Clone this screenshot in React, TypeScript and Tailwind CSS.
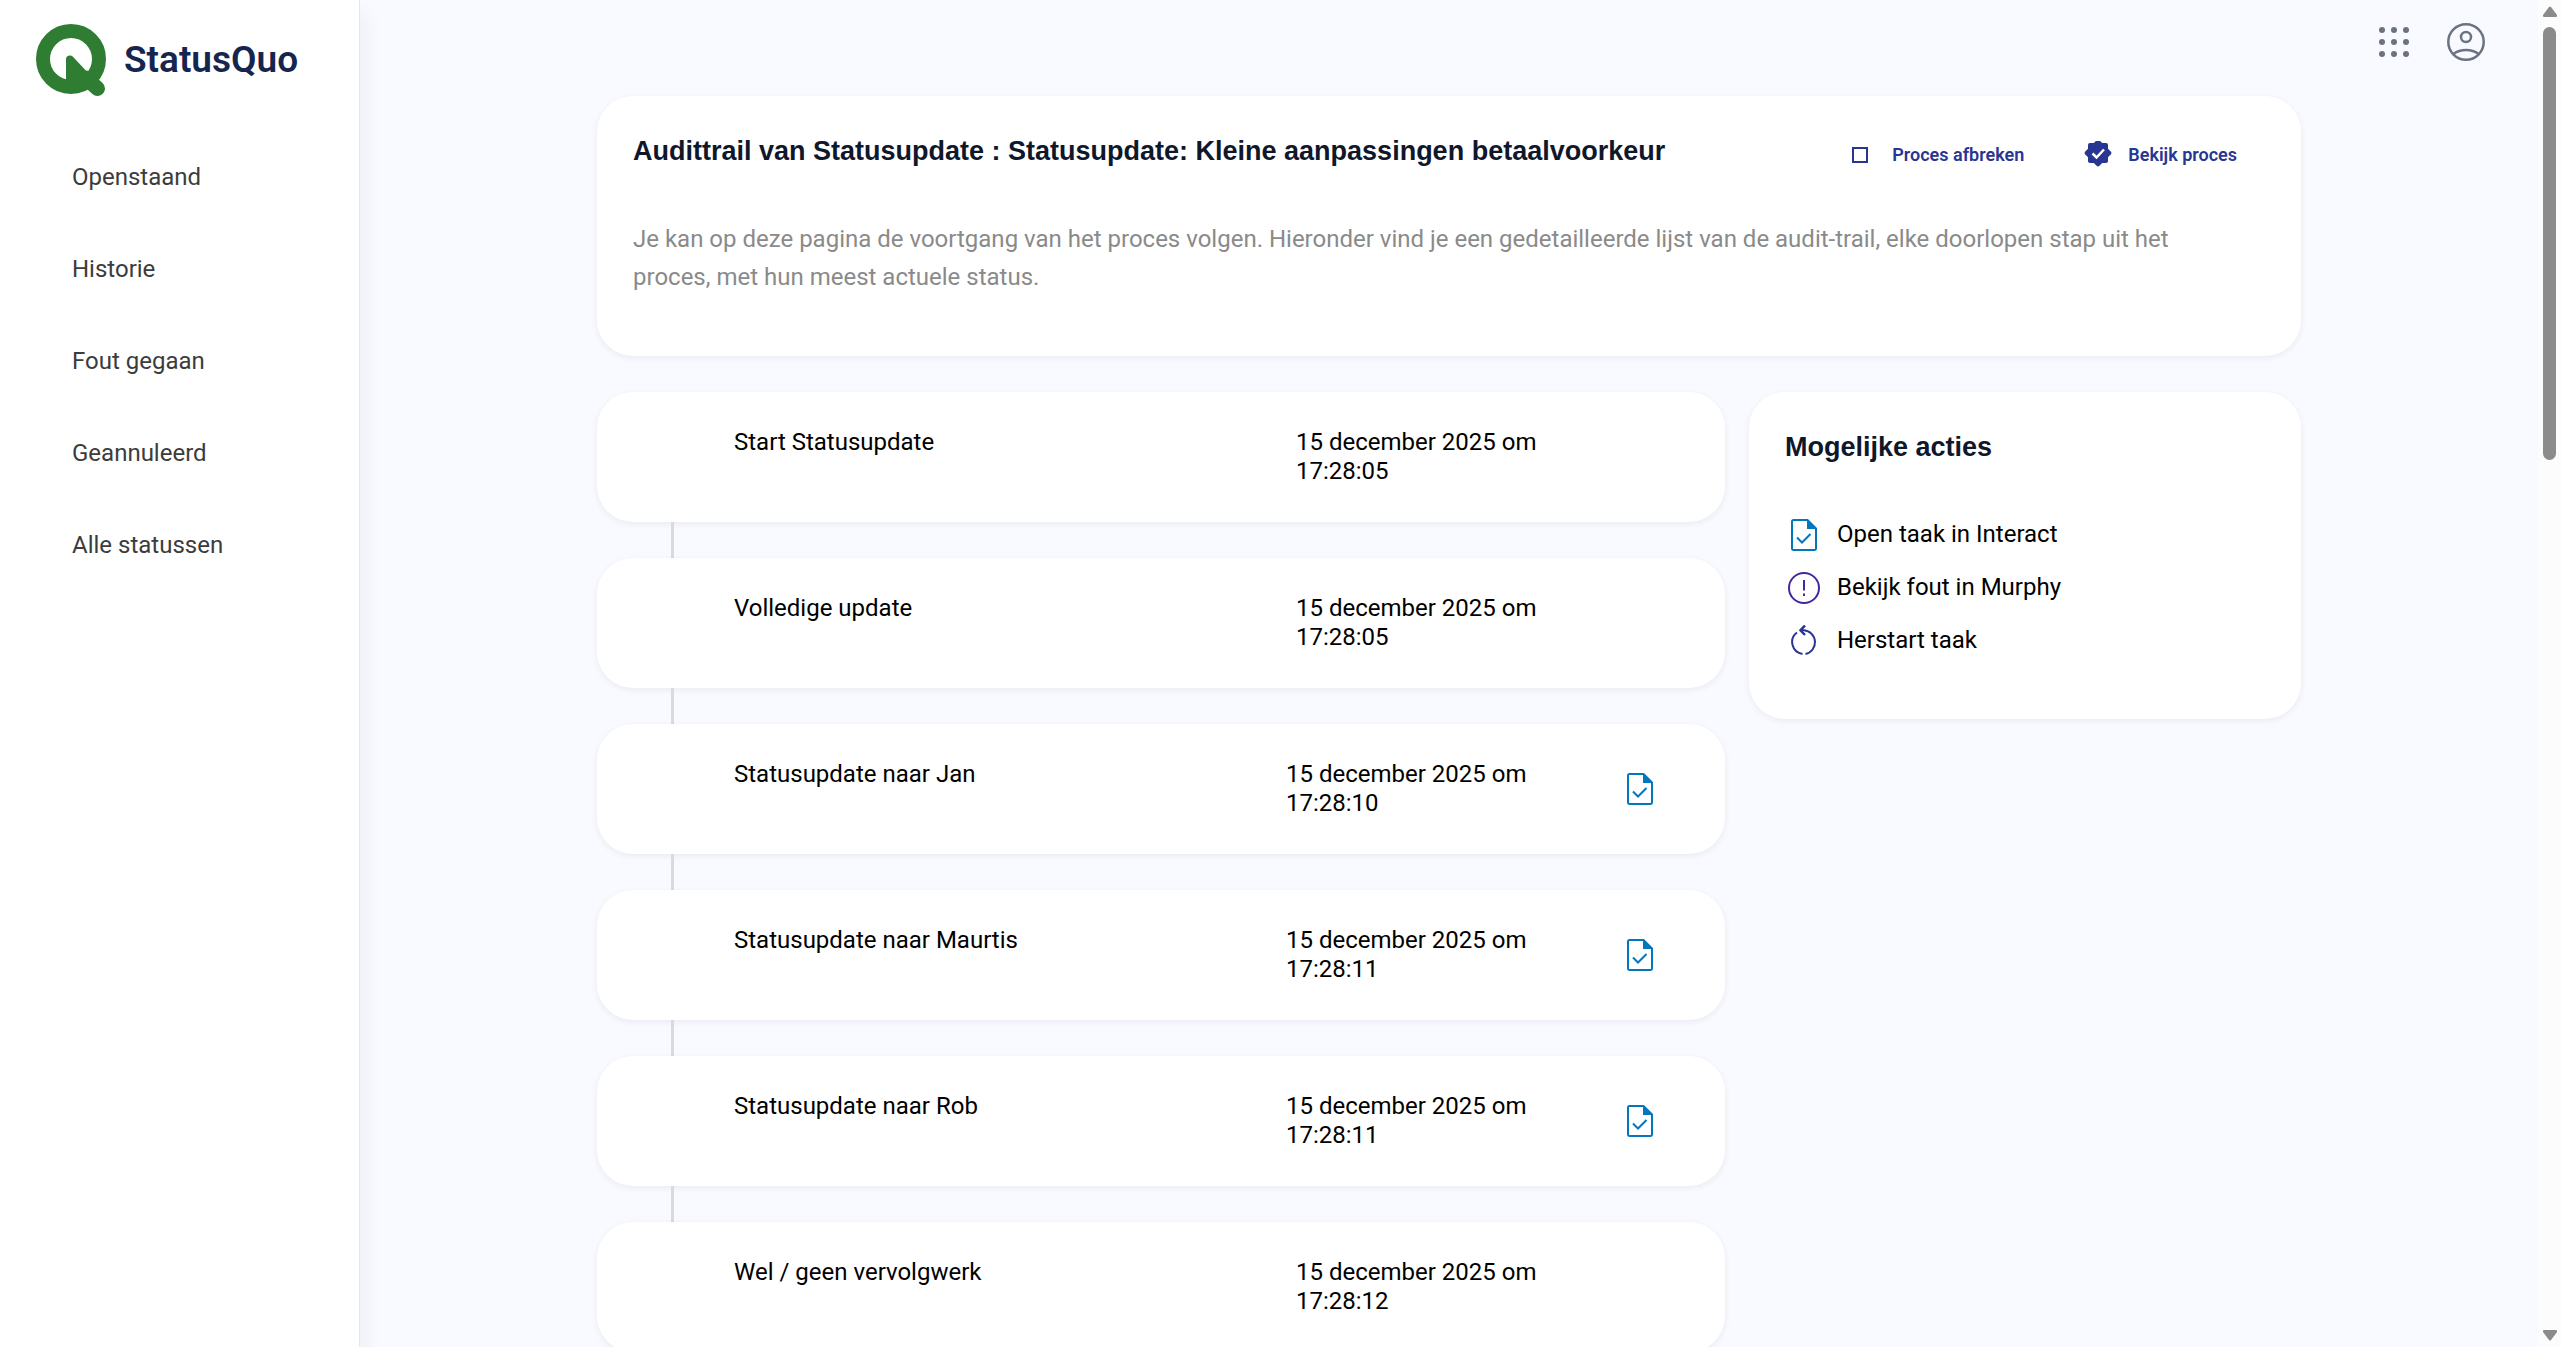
type Step = {
  name: string;
  time: string;
  task?: boolean;
};

const menu = ["Openstaand", "Historie", "Fout gegaan", "Geannuleerd", "Alle statussen"];

const steps: Step[] = [
  { name: "Start Statusupdate", time: "15 december 2025 om 17:28:05" },
  { name: "Volledige update", time: "15 december 2025 om 17:28:05" },
  { name: "Statusupdate naar Jan", time: "15 december 2025 om 17:28:10", task: true },
  { name: "Statusupdate naar Maurtis", time: "15 december 2025 om 17:28:11", task: true },
  { name: "Statusupdate naar Rob", time: "15 december 2025 om 17:28:11", task: true },
  { name: "Wel / geen vervolgwerk", time: "15 december 2025 om 17:28:12" },
];

const card = "rounded-[36px] bg-white shadow-[0_2px_6px_rgba(20,40,90,0.07)]";

function Logo() {
  return (
    <svg className="size-[72px] shrink-0" viewBox="0 0 72 72" aria-hidden="true">
      <circle cx="35" cy="35" r="28" fill="none" stroke="#2e7d32" strokeWidth="14" />
      <path d="M34 35.500L57 60H34z" fill="#2e7d32" stroke="#2e7d32" strokeWidth="8" strokeLinejoin="round" />
      <path d="M50 54l11.500 10.500" stroke="#2e7d32" strokeWidth="15" strokeLinecap="round" />
    </svg>
  );
}

function TaskIcon() {
  return (
    <svg className="h-8 w-[26px]" viewBox="0 0 26 32" fill="none" aria-hidden="true">
      <path
        d="M2.500 1H16.500L25 9.500V29.500A1.500 1.500 0 0 1 23.500 31H2.500A1.500 1.500 0 0 1 1 29.500V2.500A1.500 1.500 0 0 1 2.500 1z"
        stroke="#0277bd"
        strokeWidth="2"
      />
      <path d="M16 0.500V10H25.500z" fill="#0277bd" />
      <path d="M6 18.500L11 23.500L19.500 15" stroke="#0277bd" strokeWidth="2" />
    </svg>
  );
}

function ErrorIcon() {
  return (
    <svg className="size-8" viewBox="0 0 32 32" fill="none" stroke="#4527a0" strokeWidth="2" aria-hidden="true">
      <circle cx="16" cy="16" r="15" />
      <path d="M16 8v10.500M16 21.500v2.500" />
    </svg>
  );
}

function RestartIcon() {
  return (
    <svg className="h-8 w-[26px]" viewBox="0 1 26 32" fill="none" stroke="#283593" strokeWidth="2" aria-hidden="true">
      <path d="M11.500 30A12 12 0 0 1 6 8.500" />
      <path d="M14.500 30A12 12 0 0 0 13 6.300H9.500" />
      <path d="M14 1.500L9.500 6.300L14 11" strokeWidth="2.500" />
    </svg>
  );
}

function BadgeIcon() {
  return (
    <svg className="size-7 shrink-0" viewBox="0 2 28 28" aria-hidden="true">
      <g fill="#283593">
        <rect x="4" y="4" width="20" height="20" rx="2" />
        <rect x="4" y="4" width="20" height="20" rx="2" transform="rotate(45 14 14)" />
      </g>
      <path d="M8.500 14.500L12.500 18.500L20 10.500" fill="none" stroke="#fff" strokeWidth="2.500" />
    </svg>
  );
}

function Sidebar() {
  return (
    <aside className="z-10 w-[360px] shrink-0 border-r border-[#e3e8f0] bg-white shadow-[4px_12px_20px_rgba(20,30,60,0.06)]">
      <a href="#" className="flex items-center gap-4 pt-6 pl-9">
        <Logo />
        <span className="text-[37px] leading-10 font-semibold text-[#16254f]">StatusQuo</span>
      </a>
      <nav className="pt-[35px] pl-[72px]">
        {menu.map((item) => (
          <a key={item} href="#" className="block py-7 leading-9 text-[#3c3c3c]">
            {item}
          </a>
        ))}
      </nav>
    </aside>
  );
}

function TopBar() {
  return (
    <header className="mb-3 flex h-21 items-center justify-end gap-[38px] pr-[53px]">
      <button type="button" aria-label="Apps">
        <svg className="size-[30px]" viewBox="0 0 30 30" fill="#6b7280">
          {[3, 15, 27].map((y) => [3, 15, 27].map((x) => <circle key={`${x}-${y}`} cx={x} cy={y} r="3" />))}
        </svg>
      </button>
      <button type="button" aria-label="Account">
        <svg className="size-[38px]" viewBox="0 0 38 38" fill="none" stroke="#6b7280" strokeWidth="2.500">
          <circle cx="19" cy="19" r="17.700" />
          <circle cx="19" cy="14" r="5" />
          <path d="M6.500 31C13.500 25.800 24.500 25.800 31.500 31" />
        </svg>
      </button>
    </header>
  );
}

function StepRow({ step }: { step: Step }) {
  return (
    <div
      className={`grid items-center py-9 pr-9 pl-[137px] text-black ${card} ${
        step.task ? "grid-cols-[2fr_1fr_127px]" : "grid-cols-[2fr_1fr_112px]"
      }`}
    >
      <span className="self-start">{step.name}</span>
      <time>{step.time}</time>
      {step.task && (
        <a href="#" aria-label={`Open taak: ${step.name}`} className="justify-self-end pr-9">
          <TaskIcon />
        </a>
      )}
    </div>
  );
}

function Action({ icon, label }: { icon: React.ReactNode; label: string }) {
  return (
    <li>
      <button type="button" className="flex h-[53px] items-center gap-[14px] text-black">
        <span className="flex w-[38px] justify-center">{icon}</span>
        {label}
      </button>
    </li>
  );
}

function Scrollbar() {
  return (
    <div className="flex w-[23px] shrink-0 flex-col items-center justify-between bg-[#fcfcfc] py-[6px]" aria-hidden="true">
      <div className="flex h-[34%] flex-col items-center gap-[9px]">
        <svg className="h-3 w-4 shrink-0" viewBox="0 0 16 12" fill="#8b8b8b">
          <path d="M7 1Q8 0 9 1L15 9Q15.500 11 14 11H2Q0.500 11 1 9z" />
        </svg>
        <div className="w-[13px] grow rounded-full bg-[#8b8b8b]" />
      </div>
      <svg className="h-3 w-4" viewBox="0 0 16 12" fill="#8b8b8b">
        <path d="M7 11Q8 12 9 11L15 3Q15.500 1 14 1H2Q0.500 1 1 3z" />
      </svg>
    </div>
  );
}

export default function App() {
  return (
    <div className="flex h-screen overflow-hidden bg-[#f9faff] font-[Roboto,sans-serif] text-[24px] leading-[29px]">
      <Sidebar />
      <div className="min-w-0 grow">
        <TopBar />
        <main className="mx-auto grid max-w-[1704px] grid-cols-3 items-start gap-x-6 gap-y-9">
          <section className={`col-span-3 px-9 pt-9 pb-15 ${card}`}>
            <div className="flex justify-between">
              <h1 className="font-['Liberation_Sans',sans-serif] text-[27px] leading-[38px] font-bold text-[#0f172a]">
                Audittrail van Statusupdate : Statusupdate: Kleine aanpassingen betaalvoorkeur
              </h1>
              <div className="flex items-center gap-15 pt-2 pr-7 text-lg leading-6 font-semibold text-[#283593]">
                <button type="button" className="flex items-center gap-6">
                  <span className="size-4 border-2 border-[#283593]" />
                  Proces afbreken
                </button>
                <button type="button" className="flex items-center gap-4">
                  <BadgeIcon />
                  Bekijk proces
                </button>
              </div>
            </div>
            <p className="mt-[50px] pr-12 leading-[38px] text-[#8a8a8a]">
              Je kan op deze pagina de voortgang van het proces volgen. Hieronder vind je een gedetailleerde lijst van de
              audit-trail, elke doorlopen stap uit het proces, met hun meest actuele status.
            </p>
          </section>

          <ol className="col-span-2">
            {steps.map((step, i) => (
              <li key={step.name}>
                {i > 0 && <div className="ml-[74px] h-9 w-[3px] bg-[#d9dadd]" />}
                <StepRow step={step} />
              </li>
            ))}
          </ol>

          <section className={`px-9 pt-9 pb-13 ${card}`}>
            <h2 className="mb-[42px] font-['Liberation_Sans',sans-serif] text-[27px] leading-[38px] font-bold text-[#0f172a]">
              Mogelijke acties
            </h2>
            <ul>
              <Action icon={<TaskIcon />} label="Open taak in Interact" />
              <Action icon={<ErrorIcon />} label="Bekijk fout in Murphy" />
              <Action icon={<RestartIcon />} label="Herstart taak" />
            </ul>
          </section>
        </main>
      </div>
      <Scrollbar />
    </div>
  );
}
